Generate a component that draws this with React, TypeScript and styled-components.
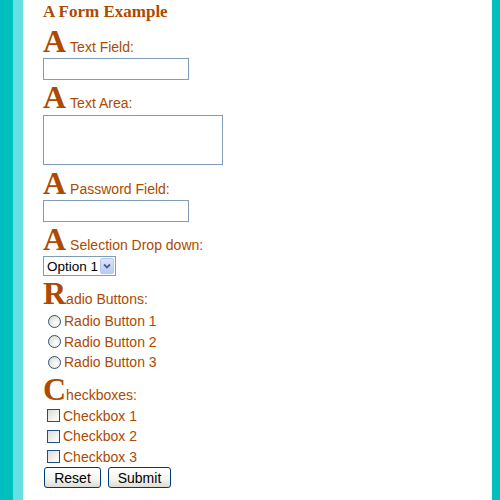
import React from "react";
import styled, { createGlobalStyle } from "styled-components";

const GlobalStyle = createGlobalStyle`
  html, body {
    margin: 0;
    padding: 0;
    background: #fff;
  }
`;

const Page = styled.div`
  display: flex;
  min-height: 100vh;
  height: 500px;
  overflow: hidden;
`;

const Strip = styled.div<{ $w: number; $color: string }>`
  flex: 0 0 ${(p) => p.$w}px;
  background: ${(p) => p.$color};
`;

const Content = styled.form`
  flex: 1;
  background: #fff;
  padding: 2px 0 0 20px;
  font-family: "Liberation Sans", Arial, sans-serif;
  color: #ad4a00;
`;

const Title = styled.div`
  font-family: "Liberation Serif", "Times New Roman", serif;
  font-weight: bold;
  font-size: 17px;
  line-height: 20px;
  margin-bottom: 8px;
`;

const Label = styled.div<{ $gap?: number }>`
  font-size: 14px;
  line-height: 22px;
  margin-top: ${(p) => p.$gap ?? 0}px;
`;

const Cap = styled.span<{ $space?: boolean }>`
  font-family: "Liberation Serif", "Times New Roman", serif;
  font-weight: bold;
  font-size: 32px;
  line-height: 22px;
  margin-right: ${(p) => (p.$space ? 4 : 0)}px;
`;

const TextInput = styled.input`
  display: block;
  box-sizing: border-box;
  width: 146px;
  height: 22px;
  margin: 0;
  border: 1px solid #7f9db9;
  font: 13px "Liberation Sans", Arial, sans-serif;
  outline: none;
`;

const TextArea = styled.textarea`
  display: block;
  box-sizing: border-box;
  width: 180px;
  height: 50px;
  margin: 1px 0 0;
  border: 1px solid #7f9db9;
  resize: none;
  font: 13px "Liberation Mono", monospace;
  outline: none;
`;

const SelectWrap = styled.div`
  position: relative;
  width: 73px;
  height: 20px;
`;

const Select = styled.select`
  appearance: none;
  box-sizing: border-box;
  width: 73px;
  height: 20px;
  margin: 0;
  padding: 0 0 0 3px;
  border: 1px solid #7f9db9;
  border-radius: 0;
  background: #fff;
  color: #000;
  font: 13.5px "Liberation Sans", Arial, sans-serif;
  outline: none;
`;

const SelectArrow = styled.span`
  position: absolute;
  right: 2px;
  top: 2px;
  width: 14px;
  height: 16px;
  box-sizing: border-box;
  background: linear-gradient(#dce6fc, #b7cbf5);
  border: 1px solid #b5c8f3;
  border-radius: 2px;
  display: flex;
  align-items: center;
  justify-content: center;
  pointer-events: none;
`;

const OptionList = styled.div<{ $gap?: number }>`
  padding-top: ${(p) => p.$gap ?? 0}px;
`;

const OptionRow = styled.label`
  display: flex;
  align-items: center;
  height: 20.5px;
  font-size: 14px;
  cursor: pointer;
`;

const RadioMark = styled.span`
  box-sizing: border-box;
  width: 13px;
  height: 13px;
  border-radius: 50%;
  border: 1px solid #2b5378;
  background: radial-gradient(circle at 65% 65%, #ffffff 0%, #e8e8e2 55%, #cfcfc8 100%);
  margin: 0 3px 0 5px;
`;

const CheckMark = styled.span`
  box-sizing: border-box;
  width: 13px;
  height: 13px;
  border: 1px solid #1c5180;
  background: linear-gradient(135deg, #dcdcd7 0%, #f2f2ee 60%, #ffffff 100%);
  margin: 0 3px 0 4px;
`;

const Buttons = styled.div`
  display: flex;
  gap: 7px;
  padding-left: 1px;
`;

const Button = styled.button<{ $w: number }>`
  box-sizing: border-box;
  width: ${(p) => p.$w}px;
  height: 21px;
  padding: 0;
  border: 1px solid #003c74;
  border-radius: 3px;
  background: linear-gradient(#ffffff 0%, #f4f4f0 60%, #dcdcd4 100%);
  color: #000;
  font: 14px "Liberation Sans", Arial, sans-serif;
  cursor: pointer;
`;

const radios = ["Radio Button 1", "Radio Button 2", "Radio Button 3"];
const checks = ["Checkbox 1", "Checkbox 2", "Checkbox 3"];

const App = () => {
  return (
    <Page>
      <GlobalStyle />
      <Strip $w={13} $color="#00bfbf" />
      <Strip $w={10} $color="#66e0e0" />
      <Content onSubmit={(e) => e.preventDefault()}>
        <Title>A Form Example</Title>

        <Label>
          <Cap $space>A</Cap>Text Field:
        </Label>
        <TextInput type="text" />

        <Label $gap={6}>
          <Cap $space>A</Cap>Text Area:
        </Label>
        <TextArea />

        <Label $gap={7}>
          <Cap $space>A</Cap>Password Field:
        </Label>
        <TextInput type="password" />

        <Label $gap={6}>
          <Cap $space>A</Cap>Selection Drop down:
        </Label>
        <SelectWrap>
          <Select defaultValue="1">
            <option value="1">Option 1</option>
            <option value="2">Option 2</option>
            <option value="3">Option 3</option>
          </Select>
          <SelectArrow>
            <svg width="8" height="6" viewBox="0 0 8 6">
              <path d="M1 1.5 L4 4.5 L7 1.5" fill="none" stroke="#4d6185" strokeWidth="1.8" />
            </svg>
          </SelectArrow>
        </SelectWrap>

        <Label $gap={6}>
          <Cap>R</Cap>adio Buttons:
        </Label>
        <OptionList $gap={1}>
          {radios.map((r) => (
            <OptionRow key={r}>
              <RadioMark />
              {r}
            </OptionRow>
          ))}
        </OptionList>

        <Label $gap={5}>
          <Cap>C</Cap>heckboxes:
        </Label>
        <OptionList>
          {checks.map((c) => (
            <OptionRow key={c}>
              <CheckMark />
              {c}
            </OptionRow>
          ))}
        </OptionList>

        <Buttons>
          <Button type="reset" $w={57}>Reset</Button>
          <Button type="submit" $w={63}>Submit</Button>
        </Buttons>
      </Content>
      <Strip $w={8} $color="#00bfbf" />
    </Page>
  );
};

export default App;
